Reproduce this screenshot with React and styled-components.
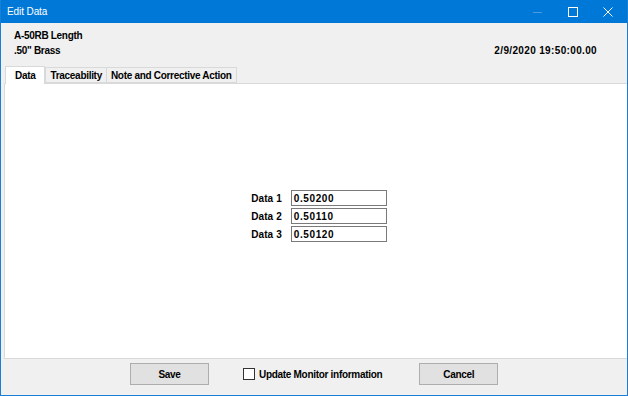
import React from "react"
import styled, { createGlobalStyle } from "styled-components"

const GlobalStyle = createGlobalStyle`
  html, body { margin: 0; padding: 0; background: #f0f0f0; }
  * { box-sizing: border-box; }
`

// window frame
const Window = styled.div`
  width: 628px;
  height: 396px;
  display: flex;
  flex-direction: column;
  background: #f0f0f0;
  border: 1px solid #1a7fd4;
  border-top: none;
  font-family: "Liberation Sans", Arial, sans-serif;
  font-size: 10px;
  letter-spacing: -0.3px;
  color: #000;
  overflow: hidden;
`
const TitleBar = styled.div`
  height: 23px;
  flex: none;
  background: #0078d7;
  display: flex;
  align-items: center;
  margin: 0 -1px;
  padding-left: 7px;
`
const Title = styled.div`
  color: #fff;
  font-size: 10px;
  letter-spacing: -0.1px;
  flex: 1;
`
const CaptionButton = styled.div`
  width: 35px;
  height: 23px;
  display: flex;
  align-items: center;
  justify-content: center;
`

// header
const Header = styled.div`
  display: flex;
  justify-content: space-between;
  align-items: flex-start;
  padding: 6px 30px 0 13px;
  height: 42px;
  flex: none;
`
const HeaderLines = styled.div`
  display: flex;
  flex-direction: column;
  gap: 2px;
`
const Bold = styled.div`
  font-weight: bold;
  line-height: 13px;
  white-space: nowrap;
  margin-top: ${(p) => p.offset || 0}px;
  letter-spacing: ${(p) => (p.numeric ? "0.35px" : "inherit")};
`

// tabs
const TabRow = styled.div`
  display: flex;
  align-items: flex-end;
  padding-left: 4px;
  height: 18px;
  flex: none;
  position: relative;
  z-index: 1;
`
const Tab = styled.div`
  height: ${(p) => (p.active ? 18 : 16)}px;
  padding: ${(p) => (p.active ? "0 9px" : "0 4px")};
  margin-bottom: ${(p) => (p.active ? -1 : 0)}px;
  background: ${(p) => (p.active ? "#fff" : "#f0f0f0")};
  border: 1px solid #d9d9d9;
  border-bottom: ${(p) => (p.active ? "none" : "1px solid #d9d9d9")};
  border-right: ${(p) => (p.active ? "1px solid #d9d9d9" : "none")};
  font-weight: bold;
  display: flex;
  align-items: center;
  white-space: nowrap;
  &:last-child { border-right: 1px solid #d9d9d9; }
`
const Panel = styled.div`
  height: 276px;
  margin: 0 0 0 3px;
  background: #fff;
  border: 1px solid #d9d9d9;
  border-right: none;
  display: flex;
  align-items: center;
  justify-content: center;
  flex: none;
`
const FieldGrid = styled.div`
  display: grid;
  grid-template-columns: auto 96px;
  column-gap: 9px;
  row-gap: 2px;
  align-items: center;
  margin: 0 0 10px 6px;
`
const Label = styled.div`
  font-weight: bold;
  text-align: right;
  letter-spacing: 0.1px;
`
const Field = styled.div`
  height: 16px;
  border: 1px solid #7a7a7a;
  background: #fff;
  font-weight: bold;
  letter-spacing: 0.6px;
  padding-left: 2px;
  display: flex;
  align-items: center;
`

// footer
const Footer = styled.div`
  flex: 1;
  display: flex;
  align-items: center;
  padding: 0 0 6px 129px;
`
const Button = styled.div`
  width: 79px;
  height: 22px;
  background: #e1e1e1;
  border: 1px solid #adadad;
  font-weight: bold;
  display: flex;
  align-items: center;
  justify-content: center;
`
const CheckWrap = styled.div`
  display: flex;
  align-items: center;
  gap: 4px;
  margin: 0 37px 0 34px;
  font-weight: bold;
`
const Box = styled.div`
  width: 12px;
  height: 12px;
  border: 1px solid #333;
  background: #fff;
`

export default function App() {
  return (
    <>
      <GlobalStyle />
      <Window>
        <TitleBar>
          <Title>Edit Data</Title>
          <CaptionButton>
            <svg width="10" height="10" viewBox="0 0 10 10">
              <path d="M0 5.5h9" stroke="#4a9be0" strokeWidth="1" />
            </svg>
          </CaptionButton>
          <CaptionButton>
            <svg width="10" height="10" viewBox="0 0 10 10">
              <rect x="0.5" y="0.5" width="9" height="9" fill="none" stroke="#fff" strokeWidth="1" />
            </svg>
          </CaptionButton>
          <CaptionButton style={{ marginRight: 3 }}>
            <svg width="10" height="10" viewBox="0 0 10 10">
              <path d="M0.5 0.5l9 9M9.5 0.5l-9 9" stroke="#fff" strokeWidth="1" />
            </svg>
          </CaptionButton>
        </TitleBar>
        <Header>
          <HeaderLines>
            <Bold>A-50RB Length</Bold>
            <Bold>.50" Brass</Bold>
          </HeaderLines>
          <Bold offset={15} numeric>2/9/2020 19:50:00.00</Bold>
        </Header>
        <TabRow>
          <Tab active>Data</Tab>
          <Tab>Traceability</Tab>
          <Tab>Note and Corrective Action</Tab>
        </TabRow>
        <Panel>
          <FieldGrid>
            <Label>Data 1</Label>
            <Field>0.50200</Field>
            <Label>Data 2</Label>
            <Field>0.50110</Field>
            <Label>Data 3</Label>
            <Field>0.50120</Field>
          </FieldGrid>
        </Panel>
        <Footer>
          <Button>Save</Button>
          <CheckWrap>
            <Box />
            Update Monitor information
          </CheckWrap>
          <Button>Cancel</Button>
        </Footer>
      </Window>
    </>
  )
}
